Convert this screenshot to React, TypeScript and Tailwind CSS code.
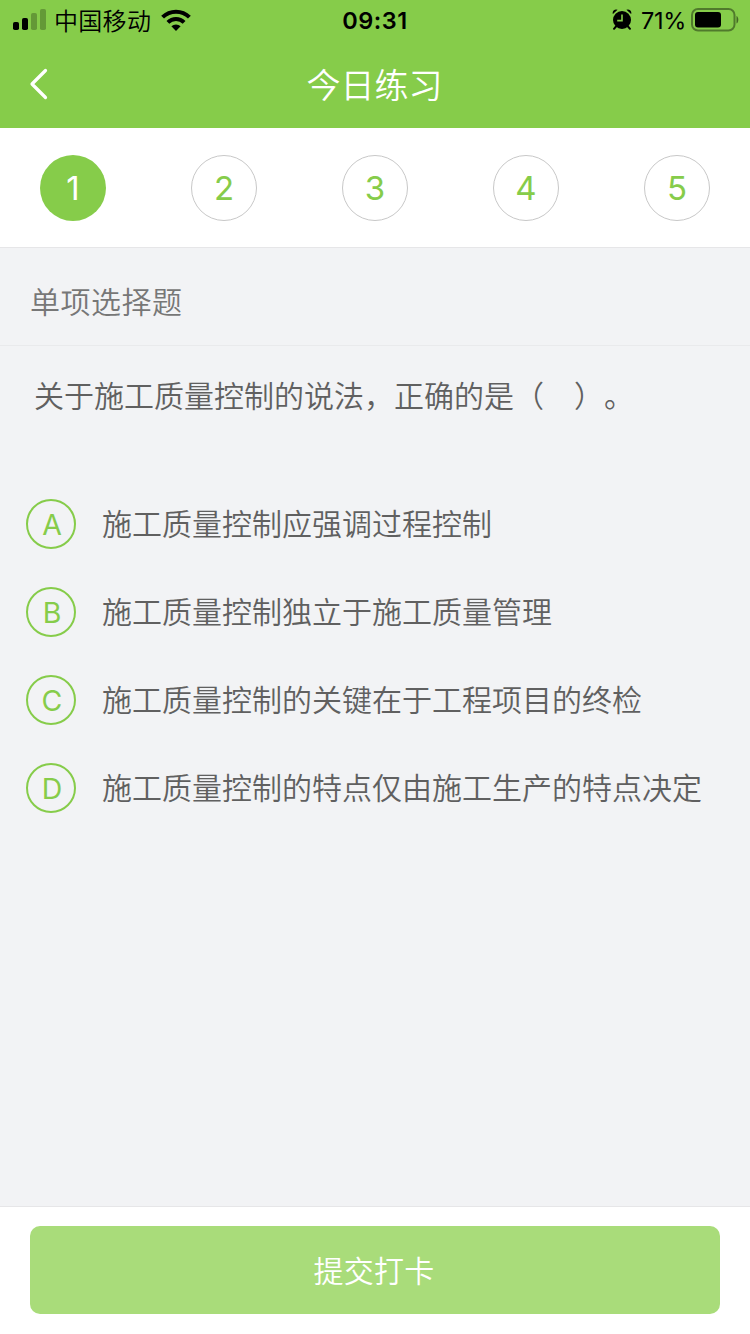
const steps = [1, 2, 3, 4, 5]

const options = [
    { key: "A", text: "施工质量控制应强调过程控制" },
    { key: "B", text: "施工质量控制独立于施工质量管理" },
    { key: "C", text: "施工质量控制的关键在于工程项目的终检" },
    { key: "D", text: "施工质量控制的特点仅由施工生产的特点决定" },
]

function StatusBar() {
    return (
        <div className="grid h-10 grid-cols-3 items-center text-black">
            <div className="flex items-center pl-[13px]">
                <svg width="34" height="22" viewBox="0 0 34 22">
                    <rect x="0" y="13" width="6" height="8" rx="1.8" />
                    <rect x="9" y="9" width="6" height="12" rx="1.8" />
                    <rect x="18" y="4" width="6" height="17" rx="1.8" opacity="0.25" />
                    <rect x="27" y="0" width="6" height="21" rx="1.8" opacity="0.25" />
                </svg>
                <span className="ml-[7px] text-[24px] leading-10 font-[350] tracking-[0.3px]">中国移动</span>
                <svg className="ml-[10px]" width="30" height="22" viewBox="0 0 30 22" fill="none" stroke="black" strokeWidth="4">
                    <path d="M1.6 8.2 A19 19 0 0 1 28.4 8.2" />
                    <path d="M6.9 13.4 A11.6 11.6 0 0 1 23.1 13.4" />
                    <path d="M15 22 L10.4 17.3 A6.6 6.6 0 0 1 19.6 17.3 Z" fill="black" stroke="none" />
                </svg>
            </div>
            <div className="pt-[2px] text-center font-['Inter',sans-serif] text-[23.5px] leading-[38px] font-semibold tracking-[0.5px]">09:31</div>
            <div className="flex items-center justify-end pr-[11px]">
                <svg className="mb-[2px]" width="20" height="21" viewBox="0 0 20 21">
                    <circle cx="10" cy="11" r="9" />
                    <path d="M0.9 5 A3.4 3.4 0 0 1 5.6 0.8 Z M14.4 0.8 A3.4 3.4 0 0 1 19.1 5 Z" />
                    <path d="M4 17.5 L2 19.8 M16 17.5 L18 19.8" stroke="black" strokeWidth="2" strokeLinecap="round" />
                    <path d="M10 5.5 V11.6 H5.2" fill="none" stroke="#86cc4a" strokeWidth="1.6" />
                </svg>
                <span className="ml-[9px] pt-[2px] font-['Inter',sans-serif] text-[23.5px] leading-[38px] tracking-[-0.3px]">71%</span>
                <svg className="ml-[5px]" width="48" height="24" viewBox="0 0 48 24">
                    <rect x="1" y="1" width="42.5" height="21.5" rx="6" fill="none" stroke="black" strokeWidth="2" opacity="0.4" />
                    <rect x="4" y="4" width="26" height="15.5" rx="3" />
                    <path d="M45.5 8 C47.9 9 47.9 14.5 45.5 15.5 Z" opacity="0.5" />
                </svg>
            </div>
        </div>
    )
}

export default function App() {
    return (
        <div lang="zh-CN" className="flex h-[1334px] w-[750px] flex-col overflow-hidden bg-[#f2f3f5] font-['Noto_Sans_CJK_SC',sans-serif]">
            <header className="h-32 bg-[#86cc4a]">
                <StatusBar />
                <div className="grid h-[88px] grid-cols-3 items-center text-white">
                    <svg className="ml-[29px]" width="20" height="32" viewBox="0 0 20 32" fill="none" stroke="white" strokeWidth="3.2" strokeLinecap="round" strokeLinejoin="round">
                        <path d="M16.5 2.5 L3 16 L16.5 29.5" />
                    </svg>
                    <h1 className="pr-[1px] pb-[2px] text-center text-[34px] font-[350] whitespace-nowrap">今日练习</h1>
                </div>
            </header>

            <div className="flex h-[120px] items-center justify-between border-b border-[#e6e6e8] bg-white px-10">
                {steps.map((n) => (
                    <div
                        key={n}
                        className={
                            n === 1
                                ? "flex size-[66px] items-center justify-center rounded-full bg-[#86cc4a] pt-[3px] font-['Inter',sans-serif] text-[33px] text-white"
                                : "flex size-[66px] items-center justify-center rounded-full border border-[#c8c8c8] pt-[3px] font-['Inter',sans-serif] text-[33px] text-[#86cc4a]"
                        }
                    >
                        {n}
                    </div>
                ))}
            </div>

            <div className="flex h-[98px] items-center border-b border-[#e9eaec] pt-[7px] pl-[30px] text-[30px] font-[350] tracking-[0.5px] text-[#777]">
                单项选择题
            </div>

            <main className="flex-1 pt-[26px]">
                <p className="pl-[34px] text-[30px] leading-[44px] font-[350] whitespace-pre text-[#606060] [text-spacing-trim:space-all]">
                    关于施工质量控制的说法，正确的是（　）。
                </p>
                <ul className="mt-[83px] flex flex-col gap-[38px] pl-[26px]">
                    {options.map((o) => (
                        <li key={o.key} className="flex h-[50px] items-center">
                            <span className="flex size-[50px] items-center justify-center rounded-full border-2 border-[#86cc4a] pt-[2px] pl-[2px] font-['Inter',sans-serif] text-[28.5px] text-[#86cc4a]">
                                {o.key}
                            </span>
                            <span className="ml-[26px] pb-[4px] text-[30px] leading-[50px] font-[350] text-[#606060]">{o.text}</span>
                        </li>
                    ))}
                </ul>
            </main>

            <footer className="h-32 border-t border-[#e6e6e8] bg-white px-[30px] pt-[19px]">
                <button className="block h-[88px] w-full rounded-[10px] bg-[#a9dc7a] pr-[2px] pb-[2px] text-[30px] font-[350] tracking-[0.3px] text-white">提交打卡</button>
            </footer>
        </div>
    )
}
